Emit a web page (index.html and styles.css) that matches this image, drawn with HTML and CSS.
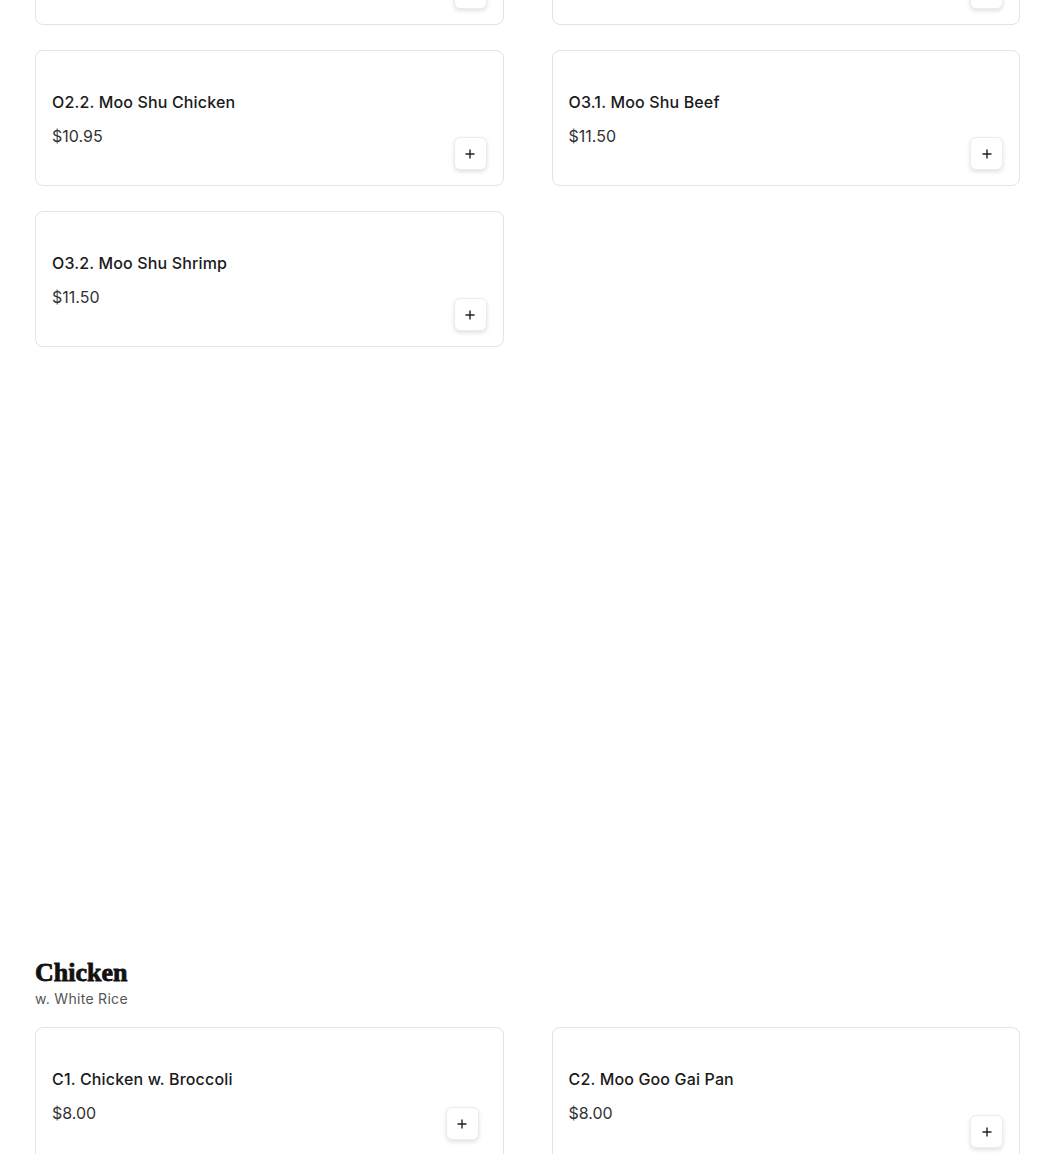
FILE: index.html
```html
<!DOCTYPE html>
<html lang="en">
<head>
    <meta charset="UTF-8">
    <title>Menu</title>
    <link rel="stylesheet" href="styles.css">
</head>
<body>
<div class="menu">
    <section class="category category-first">
        <div class="item-grid">
            <div class="item-card">
                <div class="item-info">
                    <p class="item-name">O2.1. Moo Shu Pork</p>
                    <p class="item-price">$10.95</p>
                </div>
                <button class="add-btn" aria-label="Add">
                    <svg width="10" height="10" viewBox="0 0 10 10"><path d="M5 0.5v9M0.5 5h9" stroke="#222" stroke-width="1.4"/></svg>
                </button>
            </div>
            <div class="item-card">
                <div class="item-info">
                    <p class="item-name">O2.3. Moo Shu Vegetable</p>
                    <p class="item-price">$10.95</p>
                </div>
                <button class="add-btn" aria-label="Add">
                    <svg width="10" height="10" viewBox="0 0 10 10"><path d="M5 0.5v9M0.5 5h9" stroke="#222" stroke-width="1.4"/></svg>
                </button>
            </div>
            <div class="item-card">
                <div class="item-info">
                    <p class="item-name">O2.2. Moo Shu Chicken</p>
                    <p class="item-price">$10.95</p>
                </div>
                <button class="add-btn" aria-label="Add">
                    <svg width="10" height="10" viewBox="0 0 10 10"><path d="M5 0.5v9M0.5 5h9" stroke="#222" stroke-width="1.4"/></svg>
                </button>
            </div>
            <div class="item-card">
                <div class="item-info">
                    <p class="item-name">O3.1. Moo Shu Beef</p>
                    <p class="item-price">$11.50</p>
                </div>
                <button class="add-btn" aria-label="Add">
                    <svg width="10" height="10" viewBox="0 0 10 10"><path d="M5 0.5v9M0.5 5h9" stroke="#222" stroke-width="1.4"/></svg>
                </button>
            </div>
            <div class="item-card">
                <div class="item-info">
                    <p class="item-name">O3.2. Moo Shu Shrimp</p>
                    <p class="item-price">$11.50</p>
                </div>
                <button class="add-btn" aria-label="Add">
                    <svg width="10" height="10" viewBox="0 0 10 10"><path d="M5 0.5v9M0.5 5h9" stroke="#222" stroke-width="1.4"/></svg>
                </button>
            </div>
        </div>
    </section>

    <section class="category">
        <h2 class="category-title">Chicken</h2>
        <p class="category-note">w. White Rice</p>
        <div class="item-grid">
            <div class="item-card item-card-short">
                <div class="item-info">
                    <p class="item-name">C1. Chicken w. Broccoli</p>
                    <p class="item-price">$8.00</p>
                </div>
                <button class="add-btn add-btn-inset" aria-label="Add">
                    <svg width="10" height="10" viewBox="0 0 10 10"><path d="M5 0.5v9M0.5 5h9" stroke="#222" stroke-width="1.4"/></svg>
                </button>
            </div>
            <div class="item-card item-card-tall">
                <div class="item-info">
                    <p class="item-name">C2. Moo Goo Gai Pan</p>
                    <p class="item-price">$8.00</p>
                </div>
                <button class="add-btn" aria-label="Add">
                    <svg width="10" height="10" viewBox="0 0 10 10"><path d="M5 0.5v9M0.5 5h9" stroke="#222" stroke-width="1.4"/></svg>
                </button>
            </div>
        </div>
    </section>
</div>
</body>
</html>
```

FILE: styles.css
```css
body {
    font-family: 'Inter', 'Open Sans', sans-serif;
    background-color: #FFFFFF;
    color: #1a1a1a;
    margin: 0;
}
.menu {
    padding: 0 30px 0 35px;
    margin-top: -111px; /* page is scrolled part way down */
}
.category {
    margin-top: 611px;
}
.category-first {
    margin-top: 0;
}
.category-title {
    font-family: 'Liberation Serif', 'DejaVu Serif', serif;
    font-weight: 700;
    font-size: 26px;
    -webkit-text-stroke: 0.8px #111;
    line-height: 30px;
    margin: 0;
    color: #111;
}
.category-note {
    font-size: 14px;
    letter-spacing: 0.3px;
    color: #555;
    margin: 1px 0 18px 0;
    line-height: 20px;
}
.item-grid {
    display: grid;
    grid-template-columns: 1fr 1fr;
    column-gap: 48px;
    row-gap: 25px;
}
.item-card {
    border: 1px solid #e3e3e3;
    border-radius: 8px;
    height: 136px;
    box-sizing: border-box;
    padding: 16px 16px 15px 16px;
    display: flex;
    justify-content: space-between;
    align-items: flex-end;
}
.item-info {
    align-self: flex-start;
    padding-top: 24px;
}
.item-name {
    font-size: 16px;
    font-weight: 500;
    letter-spacing: 0.15px;
    line-height: 22px;
    margin: 0;
}
.item-price {
    font-size: 16px;
    color: #333;
    line-height: 22px;
    margin: 12px 0 0 0;
}
.add-btn {
    width: 33px;
    height: 33px;
    border: 1px solid #ececec;
    border-radius: 6px;
    background-color: #FFFFFF;
    box-shadow: 0 2px 4px rgba(0, 0, 0, 0.12);
    display: flex;
    justify-content: center;
    align-items: center;
    padding: 0;
    cursor: pointer;
}
.add-btn-inset {
    margin-right: 8px;
    margin-bottom: 8px;
}
.item-card-short {
    height: 137px;
}
.item-card-tall {
    height: 137px;
}
```
